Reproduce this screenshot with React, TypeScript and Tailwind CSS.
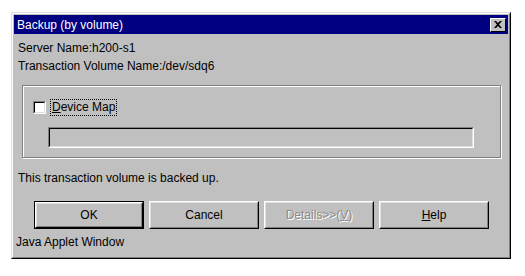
import { ReactNode } from 'react';

const font = { fontFamily: '"Liberation Sans", Arial, sans-serif' };

function Button({ children, isDefault, disabled }: { children: ReactNode; isDefault?: boolean; disabled?: boolean }) {
  return (
    <div className={`w-[110px] h-[28px] ${isDefault ? 'border border-black' : ''}`}>
      <div className="h-full border border-t-white border-l-white border-r-black border-b-black">
        <div className="h-full border border-t-[#dfdfdf] border-l-[#dfdfdf] border-r-[#808080] border-b-[#808080] flex items-center justify-center text-[12px]">
          {disabled ? (
            <span className="text-[#8a8a8a] [text-shadow:1px_1px_0_#ffffff]">{children}</span>
          ) : (
            <span className="text-black">{children}</span>
          )}
        </div>
      </div>
    </div>
  );
}

export default function App() {
  return (
    <div className="w-[525px] h-[276px] bg-white pt-[12px] pl-[11px]" style={font}>
      <div className="w-[500px] h-[247px] border border-t-[#dfdfdf] border-l-[#dfdfdf] border-r-black border-b-black">
        <div className="h-full border border-t-white border-l-white border-r-[#808080] border-b-[#808080] bg-[#c0c0c0] p-px flex flex-col">
          <div className="h-[19px] bg-[#000080] flex items-center justify-between pl-[3px] pr-[2px]">
            <span className="text-white text-[12px]">Backup (by volume)</span>
            <div className="w-[16px] h-[14px] bg-[#c0c0c0] border border-t-white border-l-white border-r-black border-b-black flex items-center justify-center">
              <svg width="8" height="7" viewBox="0 0 8 7">
                <path d="M0 0h2l2 2 2-2h2L5 3.5 8 7H6L4 5 2 7H0l3-3.5z" fill="#000" />
              </svg>
            </div>
          </div>

          <div className="pl-[4px] mt-[5px] text-[12px] leading-[18px] text-black">
            <div>Server Name:h200-s1</div>
            <div>Transaction Volume Name:/dev/sdq6</div>
          </div>

          <div className="ml-[8px] mt-[10px] w-[479px] h-[73px] border border-[#808080]">
            <div className="h-full border-t border-l border-white border-r-0 border-b-0 relative">
              <div className="absolute -right-[2px] top-[-1px] bottom-[-2px] w-px bg-white" />
              <div className="absolute left-[-1px] -bottom-[2px] right-[-2px] h-px bg-white" />
              <div className="flex items-center mt-[12px] ml-[9px]">
                <div className="w-[13px] h-[13px] border border-t-[#808080] border-l-[#808080] border-r-white border-b-white">
                  <div className="w-full h-full bg-white border border-t-black border-l-black border-r-[#dfdfdf] border-b-[#dfdfdf]" />
                </div>
                <span className="ml-[4px] px-px text-[12px] leading-[15px] border border-dotted border-black text-black">
                  <span className="underline">D</span>evice Map
                </span>
              </div>
              <div className="ml-[24px] mt-[11px] w-[426px] h-[21px] border border-t-[#808080] border-l-[#808080] border-r-white border-b-white">
                <div className="h-full border border-t-black border-l-black border-r-[#dfdfdf] border-b-[#dfdfdf] bg-[#c0c0c0]" />
              </div>
            </div>
          </div>

          <div className="pl-[4px] mt-[11px] text-[12px] leading-[18px] text-black">
            This transaction volume is backed up.
          </div>

          <div className="flex gap-[5px] ml-[20px] mt-[14px]">
            <Button isDefault>OK</Button>
            <Button>Cancel</Button>
            <Button disabled>
              Details&gt;&gt;(<span className="underline">V</span>)
            </Button>
            <Button>
              <span className="underline">H</span>elp
            </Button>
          </div>

          <div className="pl-[2px] mt-[4px] text-[12px] leading-[18px] text-black">Java Applet Window</div>
        </div>
      </div>
    </div>
  );
}
